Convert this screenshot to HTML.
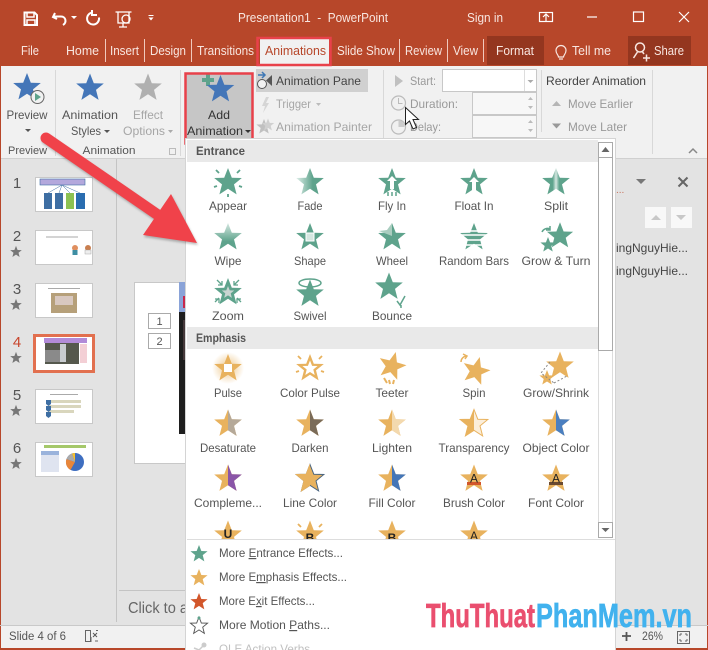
<!DOCTYPE html>
<html><head><meta charset="utf-8"><title>PowerPoint</title>
<style>
html,body{margin:0;padding:0;background:#e3e3e3}
svg{display:block;font-family:"Liberation Sans",sans-serif}
.t{font-size:12px;fill:#444}
.w{font-size:12.5px;fill:#f8e6e0}
.g{font-size:12px;fill:#a6a6a6}
.l{font-size:12px;fill:#555;text-anchor:middle}
.h{font-size:12px;font-weight:bold;fill:#555}
.m{font-size:12px;fill:#555}
</style></head><body>
<svg width="708" height="650" viewBox="0 0 708 650" xmlns="http://www.w3.org/2000/svg">
<defs>
<path id="s" d="M0-14.500 3.800-4.800 13.800-4.500 6 1.900 8.600 11.900 0 6.300-8.600 11.900-6 1.900-13.800-4.500-3.800-4.800Z"/>
<clipPath id="L"><rect x="-15" y="-15" width="15" height="30"/></clipPath>
<clipPath id="R"><rect x="0" y="-15" width="15" height="30"/></clipPath>
<clipPath id="gal"><rect x="186" y="140" width="412" height="399"/></clipPath>
<linearGradient id="fade" x1="0" x2="1" y1="0" y2="0"><stop offset="0" stop-color="#dfeee9"/><stop offset=".6" stop-color="#5ea38c"/></linearGradient>
<linearGradient id="wipe" x1="0" x2="0" y1="0" y2="1"><stop offset="0" stop-color="#d5e7e1"/><stop offset=".7" stop-color="#5ea38c"/></linearGradient>
<linearGradient id="split" x1="0" x2="1" y1="0" y2="0"><stop offset=".38" stop-color="#5ea38c"/><stop offset=".5" stop-color="#d5e7e1"/><stop offset=".62" stop-color="#5ea38c"/></linearGradient>
<radialGradient id="pulse"><stop offset=".4" stop-color="#e8b25e" stop-opacity=".45"/><stop offset="1" stop-color="#e8b25e" stop-opacity="0"/></radialGradient>
</defs>

<!-- base -->
<rect width="708" height="650" fill="#e3e3e3"/>
<rect y="0" width="708" height="66" fill="#b7472a"/>
<rect y="66" width="708" height="92" fill="#f1f1f1"/>
<rect y="158" width="708" height="1" fill="#d0d0d0"/>
<rect x="0" y="66" width="1" height="584" fill="#b7472a"/>
<rect x="707" y="66" width="1" height="584" fill="#b7472a"/>

<!-- title bar -->
<g fill="none" stroke="#fff" stroke-width="2">
<path d="M24.500 12.500h10l2.500 2.500v10h-12.500z"/>
<path d="M27 13v4h7v-4M27 25v-5h8v5" stroke-width="1.500"/>
<path d="M55 13l-2 4 4 2M54 16.500h7c5 0 6 6 2 8.500"/>
<path d="M93 12.500a6 6 0 1 0 6 5M92 10v5h5"/>
<path d="M115.500 12h16M118 12v11h11v-11M123 23v4h-4h8" stroke-width="1.300"/>
<circle cx="126" cy="19" r="4" stroke-width="1.300"/>
</g>
<path d="M71 16h6l-3 3zM148.500 15h5v1h-5zM148.500 17.500h5l-2.500 3z" fill="#fff"/>
<text x="238" y="22" class="w" textLength="150" lengthAdjust="spacingAndGlyphs">Presentation1&#160; -&#160; PowerPoint</text>
<text x="467" y="22" class="w" textLength="36" lengthAdjust="spacingAndGlyphs">Sign in</text>
<g fill="none" stroke="#fff" stroke-width="1.200">
<rect x="539.500" y="12.500" width="13" height="9"/><path d="M543 17l3-3 3 3M546 14v7"/>
<path d="M587 17h10"/>
<rect x="633.500" y="12" width="10" height="9.500"/>
<path d="M679 12l10 10M689 12l-10 10"/>
</g>

<!-- tabs -->
<rect x="487" y="36" width="57" height="29" fill="#94361f"/>
<rect x="628" y="36" width="63" height="29" fill="#94361f"/>
<rect x="260" y="39" width="69" height="27" fill="#f1f1f1"/>
<g fill="#f1c9bd"><rect x="105" y="39" width="1" height="23"/><rect x="144" y="39" width="1" height="23"/><rect x="191" y="39" width="1" height="23"/><rect x="399" y="39" width="1" height="23"/><rect x="447" y="39" width="1" height="23"/><rect x="483" y="39" width="1" height="23"/></g>
<g class="w">
<text x="21" y="55" class="w" textLength="18" lengthAdjust="spacingAndGlyphs">File</text>
<text x="66" y="55" class="w" textLength="33" lengthAdjust="spacingAndGlyphs">Home</text>
<text x="110" y="55" class="w" textLength="29" lengthAdjust="spacingAndGlyphs">Insert</text>
<text x="150" y="55" class="w" textLength="36" lengthAdjust="spacingAndGlyphs">Design</text>
<text x="197" y="55" class="w" textLength="57" lengthAdjust="spacingAndGlyphs">Transitions</text>
<text x="265" y="55" style="font-size:12.500px;fill:#b7472a" textLength="61" lengthAdjust="spacingAndGlyphs">Animations</text>
<text x="337" y="55" class="w" textLength="58" lengthAdjust="spacingAndGlyphs">Slide Show</text>
<text x="405" y="55" class="w" textLength="37" lengthAdjust="spacingAndGlyphs">Review</text>
<text x="453" y="55" class="w" textLength="25" lengthAdjust="spacingAndGlyphs">View</text>
<text x="496" y="55" class="w" textLength="38" lengthAdjust="spacingAndGlyphs">Format</text>
<text x="572" y="55" class="w" textLength="39" lengthAdjust="spacingAndGlyphs">Tell me</text>
<text x="654" y="55" class="w" textLength="30" lengthAdjust="spacingAndGlyphs">Share</text>
</g>
<g fill="none" stroke="#f8e6e0" stroke-width="1.200">
<path d="M559 59h4M558.500 57c0-2-2.500-3-2.500-6.500a5 5 0 0 1 10 0c0 3.500-2.500 4.500-2.500 6.500z"/>
<circle cx="640" cy="47.500" r="4.500" stroke-width="1.500"/><path d="M637.500 52l-4 6M642.500 52l1.500 2M643 58h7M646.500 54.500v7" stroke-width="1.500"/>
</g>

<!-- ribbon separators -->
<g fill="#d8d8d8"><rect x="55" y="70" width="1" height="86"/><rect x="180" y="70" width="1" height="86"/><rect x="383" y="70" width="1" height="68"/><rect x="541" y="70" width="1" height="62"/><rect x="652" y="70" width="1" height="84"/></g>

<!-- Preview group -->
<use href="#s" x="27" y="87.500" fill="#4476b8"/>
<circle cx="37.500" cy="97" r="6.500" fill="#f1f1f1" stroke="#666"/>
<path d="M35 93l6 4-6 4z" fill="#5ea38c"/>
<text x="27" y="119" class="l" style="font-size:12px" textLength="41" lengthAdjust="spacingAndGlyphs">Preview</text>
<path d="M25 129h6l-3 3z" fill="#555"/>
<text x="27.500" y="154" class="l" style="font-size:11px" fill="#555" textLength="39" lengthAdjust="spacingAndGlyphs">Preview</text>

<use href="#s" x="90" y="88" fill="#4476b8"/>
<use href="#s" x="148" y="88" fill="#b0b0b0"/>
<text x="90" y="119" class="l" textLength="56" lengthAdjust="spacingAndGlyphs">Animation</text>
<text x="71" y="135" class="t" style="fill:#555" textLength="30" lengthAdjust="spacingAndGlyphs">Styles</text>
<path d="M104 130h6l-3 3z" fill="#555"/>
<text x="148" y="119" class="g" text-anchor="middle" textLength="30" lengthAdjust="spacingAndGlyphs">Effect</text>
<text x="123" y="135" class="g" textLength="42" lengthAdjust="spacingAndGlyphs">Options</text>
<path d="M168 130h5l-2.500 3z" fill="#aaa"/>
<text x="109" y="154" class="l" style="font-size:11px" textLength="53" lengthAdjust="spacingAndGlyphs">Animation</text>
<rect x="169.500" y="148.500" width="6" height="6" fill="none" stroke="#bbb"/>

<!-- Add Animation -->
<rect x="186" y="74" width="66" height="68" fill="#c6c6c6"/>
<path d="M206 74h4v4h4v4h-4v4h-4v-4h-4v-4h4z" fill="#5ea38c"/>
<use href="#s" x="220.500" y="89.500" fill="#4476b8"/>
<text x="219" y="119" class="l" style="fill:#333" textLength="22" lengthAdjust="spacingAndGlyphs">Add</text>
<text x="187" y="135" class="t" style="fill:#333" textLength="56" lengthAdjust="spacingAndGlyphs">Animation</text>
<path d="M245 130h6l-3 3z" fill="#333"/>
<rect x="185.500" y="73.500" width="67" height="70" fill="none" stroke="#e8414a" stroke-width="2.500"/>
<rect x="257.500" y="38" width="73" height="27" fill="none" stroke="#e8414a" stroke-width="2.500"/>

<!-- Animation pane col -->
<rect x="256" y="69" width="112" height="23" fill="#d0d0d0"/>
<circle cx="262" cy="84" r="4.500" fill="#f1f1f1" stroke="#555"/>
<path d="M258 75h6M262 72l3 3-3 3" fill="none" stroke="#3f78b5" stroke-width="1.500"/>
<path d="M272 75v11l-6-5.500z" fill="#555"/>
<text x="276" y="85" class="t" textLength="85" lengthAdjust="spacingAndGlyphs">Animation Pane</text>
<path d="M266 97l-4 9h3l-2 7 6-10h-3l3-6z" fill="#d5d5d5"/>
<text x="276" y="108" class="g" textLength="35" lengthAdjust="spacingAndGlyphs">Trigger</text>
<path d="M316 103h5l-2.500 3z" fill="#bbb"/>
<use href="#s" transform="translate(264 127) scale(.55)" fill="#c0c0c0"/>
<use href="#s" transform="translate(268 125) scale(.45)" fill="#d0d0d0"/>
<text x="276" y="131" class="g" textLength="96" lengthAdjust="spacingAndGlyphs">Animation Painter</text>

<!-- timing -->
<path d="M395 75l8 6-8 6z" fill="#c0c0c0"/>
<text x="410" y="85" class="g" style="fill:#999" textLength="26" lengthAdjust="spacingAndGlyphs">Start:</text>
<rect x="442.500" y="69.500" width="94" height="22" fill="#fff" stroke="#c8c8c8"/>
<rect x="524" y="70" width="1" height="21" fill="#ddd"/>
<path d="M527.500 80h6l-3 3z" fill="#aaa"/>
<circle cx="398.500" cy="103" r="7" fill="none" stroke="#bbb" stroke-width="1.200"/><path d="M398.500 98v5.500h4" fill="none" stroke="#bbb"/>
<text x="410" y="108" class="g" style="fill:#999" textLength="48" lengthAdjust="spacingAndGlyphs">Duration:</text>
<rect x="472.500" y="92.500" width="64" height="22" fill="#f7f7f7" stroke="#c8c8c8"/>
<circle cx="398.500" cy="127" r="7" fill="none" stroke="#bbb" stroke-width="1.200"/><path d="M398.500 127v-7a7 7 0 0 1 6 7z" fill="#ccc"/>
<text x="410" y="131" class="g" style="fill:#999" textLength="31" lengthAdjust="spacingAndGlyphs">Delay:</text>
<rect x="472.500" y="115.500" width="64" height="22" fill="#f7f7f7" stroke="#c8c8c8"/>
<path d="M528 100h5l-2.500-3zM528 106h5l-2.500 3zM528 123h5l-2.500-3zM528 129h5l-2.500 3z" fill="#bbb"/>

<!-- reorder -->
<text x="546" y="85" class="t" textLength="100" lengthAdjust="spacingAndGlyphs">Reorder Animation</text>
<path d="M552 106l4.500-5 4.500 5z" fill="#b5b5b5"/>
<text x="568" y="108" class="g" style="fill:#999" textLength="65" lengthAdjust="spacingAndGlyphs">Move Earlier</text>
<path d="M552 123.500h9l-4.500 5z" fill="#999"/>
<text x="568" y="131" class="g" style="fill:#999" textLength="59" lengthAdjust="spacingAndGlyphs">Move Later</text>
<path d="M689 153l4-4 4 4" fill="none" stroke="#888" stroke-width="1.500"/>

<!-- left panel -->
<rect x="116" y="159" width="1" height="463" fill="#c4c4c4"/>
<g style="font-size:15px" fill="#555" text-anchor="middle">
<text x="17" y="188">1</text><text x="17" y="241">2</text><text x="17" y="294">3</text><text x="17" y="347" fill="#c8452c">4</text><text x="17" y="400">5</text><text x="17" y="453">6</text>
</g>
<g fill="#777">
<use href="#s" transform="translate(16 252) scale(.42)"/><use href="#s" transform="translate(16 305) scale(.42)"/><use href="#s" transform="translate(16 358) scale(.42)"/><use href="#s" transform="translate(16 411) scale(.42)"/><use href="#s" transform="translate(16 464) scale(.42)"/>
</g>
<!-- thumbs -->
<g fill="#fff" stroke="#c8c8c8">
<rect x="35.500" y="177.500" width="57" height="34"/>
<rect x="35.500" y="230.500" width="57" height="34"/>
<rect x="35.500" y="283.500" width="57" height="34"/>
<rect x="35.500" y="389.500" width="57" height="34"/>
<rect x="35.500" y="442.500" width="57" height="34"/>
</g>
<rect x="34.500" y="335.500" width="59" height="36" fill="#fff" stroke="#e2704f" stroke-width="3"/>
<!-- thumb1 -->
<rect x="40" y="179" width="45" height="6" fill="#b3a8dc" stroke="#3e6ea3" stroke-width=".6"/>
<rect x="44" y="193" width="8" height="16" fill="#3e6ea3"/><rect x="55" y="193" width="8" height="16" fill="#3e6ea3"/><rect x="66" y="193" width="8" height="16" fill="#8cc152"/><rect x="76" y="193" width="9" height="16" fill="#2a6db0"/>
<path d="M62 185L48 193M62 185L59 193M62 185L70 193M62 185L80 193" stroke="#3e6ea3" stroke-width=".5" fill="none"/>
<!-- thumb2 -->
<rect x="46" y="236.500" width="32" height="1" fill="#aaa"/>
<circle cx="75" cy="248" r="3" fill="#e08f5f"/><rect x="72.500" y="250" width="5" height="5" fill="#3e8ea3"/>
<circle cx="88" cy="248" r="3" fill="#c97f50"/><rect x="85" y="250" width="6" height="4" fill="#eee" stroke="#999" stroke-width=".4"/>
<!-- thumb3 -->
<rect x="48" y="288" width="32" height="1" fill="#aaa"/>
<rect x="51" y="293" width="26" height="20" fill="#b6a07a"/><rect x="55" y="296" width="18" height="9" fill="#d8c8c0"/>
<!-- thumb4 -->
<rect x="44" y="338" width="43" height="5" fill="#b28bd8"/>
<rect x="45" y="343" width="34" height="21" fill="#55584d"/><rect x="45" y="350" width="16" height="12" fill="#8a8a8a"/><rect x="60" y="344" width="6" height="18" fill="#c8ccd0"/>
<rect x="80" y="344" width="7" height="19" fill="#f3cfd5"/>
<!-- thumb5 -->
<rect x="50" y="394" width="28" height="1" fill="#aaa"/>
<rect x="48" y="400" width="33" height="3" fill="#d9d6bd"/><rect x="48" y="405" width="33" height="3" fill="#d9d6bd"/><rect x="48" y="410" width="26" height="3" fill="#d9d6bd"/>
<path d="M46 400h5v4l-2.500 2-2.500-2zM46 406h5v4l-2.500 2-2.500-2zM46 412h5v4l-2.500 2-2.500-2z" fill="#3e6ea3"/>
<!-- thumb6 -->
<rect x="44" y="445" width="42" height="3" fill="#a5c86a"/>
<rect x="41" y="451" width="18" height="21" fill="#dfe4f0"/><rect x="41" y="451" width="18" height="4" fill="#9ab3dc"/>
<circle cx="75" cy="462" r="9" fill="#3e6ec0"/><path d="M75 462l-8.500-3a9 9 0 0 0 4 11z" fill="#e8863a"/><path d="M75 462l-3-8.500a9 9 0 0 0-5.500 5.500z" fill="#aaa"/><path d="M75 462v-9a9 9 0 0 0-3 .5z" fill="#f5c030"/>

<!-- slide -->
<rect x="134.500" y="282.500" width="60" height="181" fill="#fff" stroke="#c8c8c8"/>
<rect x="179" y="282" width="10" height="30" fill="#8aa3d8"/><rect x="183" y="296" width="6" height="12" fill="#c8274c"/>
<rect x="179" y="312" width="10" height="122" fill="#1e1e1e"/><rect x="183" y="320" width="5" height="40" fill="#45383a"/>
<g fill="#fff" stroke="#aaa"><rect x="148.500" y="313.500" width="22" height="15"/><rect x="148.500" y="333.500" width="22" height="15"/></g>
<text x="159.500" y="325" text-anchor="middle" style="font-size:11px" fill="#555">1</text>
<text x="159.500" y="345" text-anchor="middle" style="font-size:11px" fill="#555">2</text>
<rect x="119" y="590" width="70" height="1" fill="#c4c4c4"/>
<text x="128" y="613" style="font-size:16px" fill="#666" textLength="60" lengthAdjust="spacingAndGlyphs">Click to a</text>

<!-- right pane -->
<path d="M636 179h10l-5 5z" fill="#777"/>
<path d="M678.500 177.500l9 9M687.500 177.500l-9 9" stroke="#666" stroke-width="2" fill="none"/>
<text x="616" y="193" style="font-size:10px" fill="#c8705a">...</text>
<rect x="645" y="207" width="21" height="21" fill="#f8f8f8"/><rect x="671" y="207" width="21" height="21" fill="#f8f8f8"/>
<path d="M651 220h10l-5-5zM676 215h10l-5 5z" fill="#c8c8c8"/>
<text x="616" y="252" class="t" style="font-size:12px" textLength="72" lengthAdjust="spacingAndGlyphs">ingNguyHie...</text>
<text x="616" y="275" class="t" style="font-size:12px" textLength="72" lengthAdjust="spacingAndGlyphs">ingNguyHie...</text>

<!-- status bar -->
<rect x="0" y="625" width="708" height="1" fill="#c9c9c9"/>
<rect x="1" y="626" width="706" height="22" fill="#f1f1f1"/>
<rect x="0" y="648" width="708" height="2" fill="#b7472a"/>
<text x="9" y="640" style="font-size:11.500px" fill="#555" textLength="57" lengthAdjust="spacingAndGlyphs">Slide 4 of 6</text>
<path d="M85.500 630.500h5v11h-5zM91 642v-5M96 630.500h2M98 641h-3" fill="none" stroke="#666"/>
<path d="M93 633l4 4M97 633l-4 4" stroke="#555" fill="none"/>
<path d="M622 636h9M626.500 632v9" stroke="#555" stroke-width="1.800"/>
<text x="642" y="640" style="font-size:11.500px" fill="#555" textLength="21" lengthAdjust="spacingAndGlyphs">26%</text>
<rect x="677.500" y="631.500" width="12" height="12" fill="none" stroke="#666"/>
<path d="M680 634h2M680 634v2M687 634h-2M687 634v2M680 641h2M680 641v-2M687 641h-2M687 641v-2" stroke="#666"/>

<!-- gallery panel -->
<rect x="185" y="138" width="431" height="513" fill="#d4d4d4"/>
<rect x="186" y="139" width="429" height="511" fill="#fff"/>
<rect x="187" y="140" width="411" height="22" fill="#e9e9e9"/>
<rect x="187" y="327" width="411" height="22" fill="#e9e9e9"/>
<text x="196" y="155" class="h" textLength="49" lengthAdjust="spacingAndGlyphs">Entrance</text>
<text x="196" y="342" class="h" textLength="50" lengthAdjust="spacingAndGlyphs">Emphasis</text>

<!-- scrollbar -->
<rect x="598" y="140" width="17" height="399" fill="#fff"/>
<rect x="598" y="350" width="1" height="172" fill="#dcdcdc"/>
<rect x="612" y="350" width="1" height="172" fill="#dcdcdc"/>
<rect x="598.500" y="142.500" width="14" height="15" fill="#fff" stroke="#aaa"/>
<path d="M601.500 152h8l-4-5z" fill="#666"/>
<rect x="598.500" y="157.500" width="14" height="193" fill="#fff" stroke="#aaa"/>
<rect x="598.500" y="522.500" width="14" height="15" fill="#fff" stroke="#aaa"/>
<path d="M601.500 528h8l-4 4z" fill="#666"/>
<rect x="187" y="539" width="428" height="1" fill="#ddd"/>

<g clip-path="url(#gal)">
<!-- entrance row 1 -->
<g fill="#5ea38c">
<use href="#s" x="228" y="182.500"/>
<path d="M216 170l3 3M240 170l-3 3M214 187l3-1M242 187l-3-1M228 197v-3" stroke="#5ea38c" stroke-width="1.800"/>
<use href="#s" x="310" y="182.500" fill="url(#fade)"/>
<use href="#s" x="392" y="182.500"/>
<path d="M392 176l5 5h-3v8h-4v-8h-3z" fill="#fff"/>
<path d="M388 192v4M392 192v4M396 192v4" stroke="#5ea38c" stroke-width="1.500"/>
<use href="#s" x="474" y="182.500"/>
<path d="M474 177l5 5h-3v9h-4v-9h-3z" fill="#fff"/>
<use href="#s" x="556" y="182.500" fill="url(#split)"/>
<!-- row 2 -->
<use href="#s" x="228" y="237.500" fill="url(#wipe)"/>
<use href="#s" x="310" y="237.500"/>
<rect x="306" y="233" width="8" height="8" fill="#d5e7e1" stroke="#fff"/>
<use href="#s" x="392" y="237.500"/>
<path d="M392 223v13l-13-5 8-1z" fill="#a9cdbf"/>
<use href="#s" x="474" y="237.500"/>
<path d="M460 231h28M459 235h30M462 240h24M462 245h24" stroke="#fff" stroke-width="1.500"/>
<use href="#s" transform="translate(560 236) scale(.95)"/>
<use href="#s" transform="translate(548 245) scale(.55)"/>
<path d="M542 232a6 6 0 0 1 8-3M550 226v4h-4" fill="none" stroke="#5ea38c" stroke-width="1.500"/>
<!-- row 3 -->
<use href="#s" x="228" y="292.500"/>
<use href="#s" transform="translate(228 292.500) scale(.45)" fill="#c9d5d1"/>
<path d="M217 280l5 5M222 281v4h-4M239 280l-5 5M234 281v4h4M215 302l4-4M219 303v-4h-4M241 302l-4-4M237 303v-4h4" stroke="#5ea38c" stroke-width="1.300" fill="none"/>
<use href="#s" x="310" y="294"/>
<ellipse cx="310" cy="283" rx="11" ry="4" fill="none" stroke="#5ea38c" stroke-width="1.500"/>
<use href="#s" x="389" y="287"/>
<path d="M397 301l3 4 5-9M401 305v3" fill="none" stroke="#5ea38c" stroke-width="1.500"/>
</g>

<!-- emphasis -->
<g fill="#e8b25e">
<circle cx="228" cy="368" r="16" fill="url(#pulse)"/>
<use href="#s" x="228" y="368.500"/>
<rect x="224" y="364" width="8" height="8" fill="#fff"/>
<use href="#s" x="310" y="368.500"/>
<use href="#s" transform="translate(310 368.500) scale(.55)" fill="#fff"/>
<path d="M298 356l3 3M322 356l-3 3M296 372l3-1M324 372l-3-1" stroke="#e8b25e" stroke-width="1.800"/>
<use href="#s" transform="translate(392 366) rotate(15)"/>
<path d="M384 378l3 5M389 380l1 4M394 380l-1 4" stroke="#e8b25e" stroke-width="2"/>
<use href="#s" transform="translate(476 371) rotate(15)"/>
<path d="M461 362a6 6 0 0 1 6-6M463 354l4 2-2 3" fill="none" stroke="#e8b25e" stroke-width="1.500"/>
<use href="#s" x="560" y="366"/>
<use href="#s" transform="translate(547 378) scale(.55)"/>
<path d="M550 362l-9 11 13 10" fill="none" stroke="#888" stroke-dasharray="2 2"/><path d="M554 383l13-7" fill="none" stroke="#888" stroke-dasharray="2 2"/>
<!-- row 2 -->
<use href="#s" x="228" y="424"/>
<g clip-path="url(#R)" transform="translate(228 424)"><use href="#s" fill="#b5a999"/></g>
<use href="#s" x="310" y="424"/>
<g clip-path="url(#R)" transform="translate(310 424)"><use href="#s" fill="#7a6b58"/></g>
<use href="#s" x="392" y="424"/>
<g clip-path="url(#R)" transform="translate(392 424)"><use href="#s" fill="#f3d9ae"/></g>
<use href="#s" x="474" y="424" fill="#fbeedb" stroke="#e8b25e"/>
<g clip-path="url(#L)" transform="translate(474 424)"><use href="#s"/></g>
<use href="#s" x="556" y="424"/>
<g clip-path="url(#R)" transform="translate(556 424)"><use href="#s" fill="#4a7fc0"/></g>
<!-- row 3 -->
<use href="#s" x="228" y="479"/>
<g clip-path="url(#R)" transform="translate(228 479)"><use href="#s" fill="#8a55a8"/></g>
<use href="#s" x="310" y="479" stroke="#4a6580" stroke-width="1"/>
<g clip-path="url(#L)" transform="translate(310 479)"><use href="#s" stroke="#e8b25e"/></g>
<use href="#s" x="392" y="479"/>
<g clip-path="url(#R)" transform="translate(392 479)"><use href="#s" fill="#4476b8"/></g>
<use href="#s" x="474" y="479"/>
<rect x="467" y="482" width="14" height="3" fill="#d2562a"/>
<use href="#s" x="556" y="479"/>
<rect x="549" y="482" width="14" height="3" fill="#6b4a30"/>
<!-- row 4 -->
<use href="#s" x="228" y="535"/><use href="#s" x="310" y="535"/><use href="#s" x="392" y="535"/><use href="#s" x="474" y="535"/>
<path d="M298 524l3 3M322 524l-3 3" stroke="#e8b25e" stroke-width="1.800"/>
</g>
<g style="font-size:12px;font-weight:bold" fill="#222" text-anchor="middle">
<text x="228" y="538">U</text><text x="310" y="542">B</text><text x="392" y="542">B</text>
</g>
<g style="font-size:12px" fill="#222" text-anchor="middle">
<text x="474" y="540">A</text><text x="474" y="482.500" >A</text><text x="556" y="482.500">A</text>
</g>
</g>

<!-- labels -->
<g class="l">
<text x="228" y="210" class="l" textLength="38" lengthAdjust="spacingAndGlyphs">Appear</text>
<text x="310" y="210" class="l" textLength="25" lengthAdjust="spacingAndGlyphs">Fade</text>
<text x="392" y="210" class="l" textLength="28" lengthAdjust="spacingAndGlyphs">Fly In</text>
<text x="474" y="210" class="l" textLength="39" lengthAdjust="spacingAndGlyphs">Float In</text>
<text x="556" y="210" class="l" textLength="24" lengthAdjust="spacingAndGlyphs">Split</text>
<text x="228" y="265" class="l" textLength="27" lengthAdjust="spacingAndGlyphs">Wipe</text>
<text x="310" y="265" class="l" textLength="32" lengthAdjust="spacingAndGlyphs">Shape</text>
<text x="392" y="265" class="l" textLength="32" lengthAdjust="spacingAndGlyphs">Wheel</text>
<text x="474" y="265" class="l" textLength="70" lengthAdjust="spacingAndGlyphs">Random Bars</text>
<text x="556" y="265" class="l" textLength="69" lengthAdjust="spacingAndGlyphs">Grow &amp; Turn</text>
<text x="228" y="320" class="l" textLength="32" lengthAdjust="spacingAndGlyphs">Zoom</text>
<text x="310" y="320" class="l" textLength="33" lengthAdjust="spacingAndGlyphs">Swivel</text>
<text x="392" y="320" class="l" textLength="40" lengthAdjust="spacingAndGlyphs">Bounce</text>
<text x="228" y="397" class="l" textLength="28" lengthAdjust="spacingAndGlyphs">Pulse</text>
<text x="310" y="397" class="l" textLength="60" lengthAdjust="spacingAndGlyphs">Color Pulse</text>
<text x="392" y="397" class="l" textLength="33" lengthAdjust="spacingAndGlyphs">Teeter</text>
<text x="474" y="397" class="l" textLength="23" lengthAdjust="spacingAndGlyphs">Spin</text>
<text x="556" y="397" class="l" textLength="66" lengthAdjust="spacingAndGlyphs">Grow/Shrink</text>
<text x="228" y="452" class="l" textLength="56" lengthAdjust="spacingAndGlyphs">Desaturate</text>
<text x="310" y="452" class="l" textLength="37" lengthAdjust="spacingAndGlyphs">Darken</text>
<text x="392" y="452" class="l" textLength="40" lengthAdjust="spacingAndGlyphs">Lighten</text>
<text x="474" y="452" class="l" textLength="71" lengthAdjust="spacingAndGlyphs">Transparency</text>
<text x="556" y="452" class="l" textLength="67" lengthAdjust="spacingAndGlyphs">Object Color</text>
<text x="228" y="507" class="l" textLength="68" lengthAdjust="spacingAndGlyphs">Compleme...</text>
<text x="310" y="507" class="l" textLength="54" lengthAdjust="spacingAndGlyphs">Line Color</text>
<text x="392" y="507" class="l" textLength="47" lengthAdjust="spacingAndGlyphs">Fill Color</text>
<text x="474" y="507" class="l" textLength="62" lengthAdjust="spacingAndGlyphs">Brush Color</text>
<text x="556" y="507" class="l" textLength="56" lengthAdjust="spacingAndGlyphs">Font Color</text>
</g>

<!-- menu items -->
<use href="#s" transform="translate(199 554) scale(.62)" fill="#5ea38c"/>
<use href="#s" transform="translate(199 578) scale(.62)" fill="#e8b25e"/>
<use href="#s" transform="translate(199 602) scale(.62)" fill="#d2562a"/>
<use href="#s" transform="translate(199 626) scale(.62)" fill="#fff" stroke="#555" stroke-width="1.500"/>
<circle cx="199" cy="618" r="1.500" fill="#5ea38c"/>
<text x="219" y="557" class="m" textLength="124" lengthAdjust="spacingAndGlyphs">More <tspan text-decoration="underline">E</tspan>ntrance Effects...</text>
<text x="219" y="581" class="m" textLength="128" lengthAdjust="spacingAndGlyphs">More E<tspan text-decoration="underline">m</tspan>phasis Effects...</text>
<text x="219" y="605" class="m" textLength="96" lengthAdjust="spacingAndGlyphs">More E<tspan text-decoration="underline">x</tspan>it Effects...</text>
<text x="219" y="629" class="m" textLength="111" lengthAdjust="spacingAndGlyphs">More Motion <tspan text-decoration="underline">P</tspan>aths...</text>
<text x="219" y="653" class="g" style="fill:#c0c0c0" textLength="91" lengthAdjust="spacingAndGlyphs">OLE Action Verbs</text>
<path d="M194 648l5 2 4-4" fill="none" stroke="#ccc" stroke-width="1.500"/><circle cx="204" cy="645" r="2.500" fill="#ccc"/>

<!-- red arrow -->
<g style="filter:drop-shadow(1px 2px 1px rgba(0,0,0,.25))">
<path d="M46 138L158 215" stroke="#f0424a" stroke-width="11" stroke-linecap="round" fill="none"/>
<path d="M171 194L197 243 143 235Z" fill="#f0424a"/>
</g>

<!-- cursor -->
<path d="M405.500 107.500v17l4-3.500 3.500 8 3.500-1.500-3.500-8h5.500z" fill="#fff" stroke="#222"/>

<!-- watermark -->
<g style="font-size:33px;font-weight:bold">
<text x="426" y="627" fill="#ea4f6f" stroke="#ea4f6f" stroke-width=".7" textLength="109" lengthAdjust="spacingAndGlyphs">ThuThuat</text>
<text x="536" y="627" fill="#41b2ee" stroke="#41b2ee" stroke-width=".7" textLength="156" lengthAdjust="spacingAndGlyphs">PhanMem.vn</text>
</g>
</svg>
</body></html>
